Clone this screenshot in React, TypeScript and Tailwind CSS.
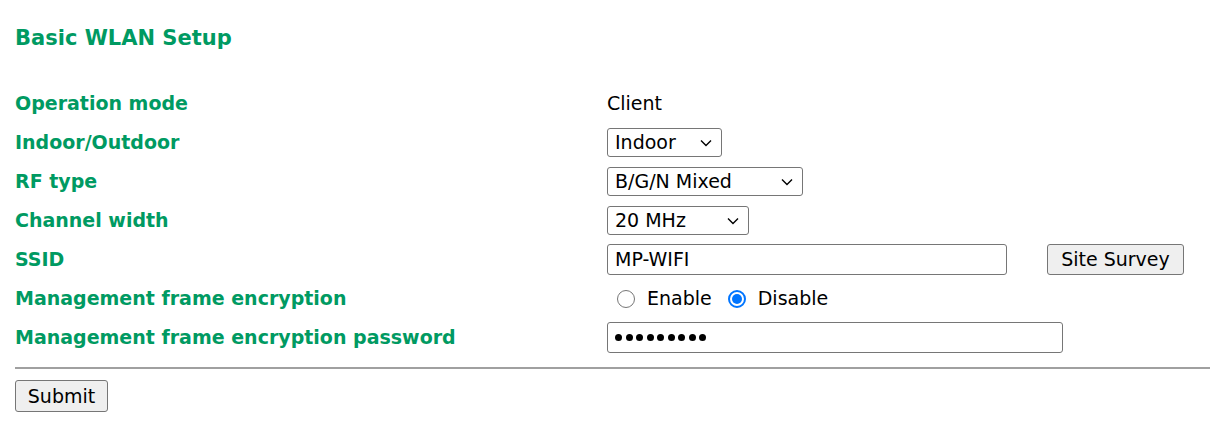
import React from "react";

const green = "text-[#009a62]";

function Chevron() {
  return (
    <svg width="12" height="8" viewBox="0 0 12 8" className="absolute right-[10px] top-1/2 -translate-y-1/2 pointer-events-none">
      <path d="M1 1.5 L6 6.5 L11 1.5" fill="none" stroke="#000" strokeWidth="1.4" />
    </svg>
  );
}

function Select({ value, width }: { value: string; width: string }) {
  return (
    <div className={`relative h-[29px] ${width}`}>
      <div className="h-full w-full rounded-[3px] border border-[#767676] bg-white pl-[7px] flex items-center text-[19px] text-black">
        {value}
      </div>
      <Chevron />
    </div>
  );
}

function Radio({ checked }: { checked?: boolean }) {
  return checked ? (
    <span className="inline-flex h-[18px] w-[18px] items-center justify-center rounded-full border-[2px] border-[#0075ff]">
      <span className="h-[10px] w-[10px] rounded-full bg-[#0075ff]" />
    </span>
  ) : (
    <span className="inline-block h-[18px] w-[18px] rounded-full border border-[#767676]" />
  );
}

const dots = [0, 1, 2, 3, 4, 5, 6, 7, 8];

const rows: { label: string; value: React.ReactNode }[] = [
  { label: "Operation mode", value: <span className="text-[19px]">Client</span> },
  { label: "Indoor/Outdoor", value: <Select value="Indoor" width="w-[115px]" /> },
  { label: "RF type", value: <Select value="B/G/N Mixed" width="w-[196px]" /> },
  { label: "Channel width", value: <Select value="20 MHz" width="w-[142px]" /> },
  {
    label: "SSID",
    value: (
      <div className="flex items-center">
        <div className="h-[31px] w-[400px] rounded-[3px] border border-[#767676] pl-[7px] flex items-center text-[19px]">
          MP-WIFI
        </div>
        <button className="ml-[40px] h-[31px] w-[137px] rounded-[3px] border border-[#767676] bg-[#efefef] text-[19px]">
          Site Survey
        </button>
      </div>
    ),
  },
  {
    label: "Management frame encryption",
    value: (
      <div className="flex items-center pl-[10px] text-[19px]">
        <Radio />
        <span className="ml-[12px]">Enable</span>
        <span className="ml-[16px] flex"><Radio checked /></span>
        <span className="ml-[12px]">Disable</span>
      </div>
    ),
  },
  {
    label: "Management frame encryption password",
    value: (
      <div className="h-[31px] w-[456px] rounded-[3px] border border-[#767676] pl-[7px] flex items-center gap-[3.5px]">
        {dots.map((d) => (
          <span key={d} className="h-[7px] w-[7px] rounded-full bg-black" />
        ))}
      </div>
    ),
  },
];

export default function App() {
  return (
    <div className="bg-white w-[1210px] h-[433px] pl-[15px] pt-[26px] text-black" style={{ fontFamily: '"DejaVu Sans", Verdana, sans-serif' }}>
      <h1 className={`text-[21px] font-bold ${green} leading-[24px]`}>Basic WLAN Setup</h1>
      <div className="mt-[34px] flex flex-col">
        {rows.map((r) => (
          <div key={r.label} className="flex items-center h-[39px]">
            <div className={`w-[592px] text-[19px] font-bold ${green}`}>{r.label}</div>
            <div>{r.value}</div>
          </div>
        ))}
      </div>
      <hr className="mt-[10px] border-t-[2px] border-[#a0a0a0]" />
      <button className="mt-[11px] h-[32px] w-[93px] rounded-[3px] border border-[#767676] bg-[#efefef] text-[19px]">
        Submit
      </button>
    </div>
  );
}
